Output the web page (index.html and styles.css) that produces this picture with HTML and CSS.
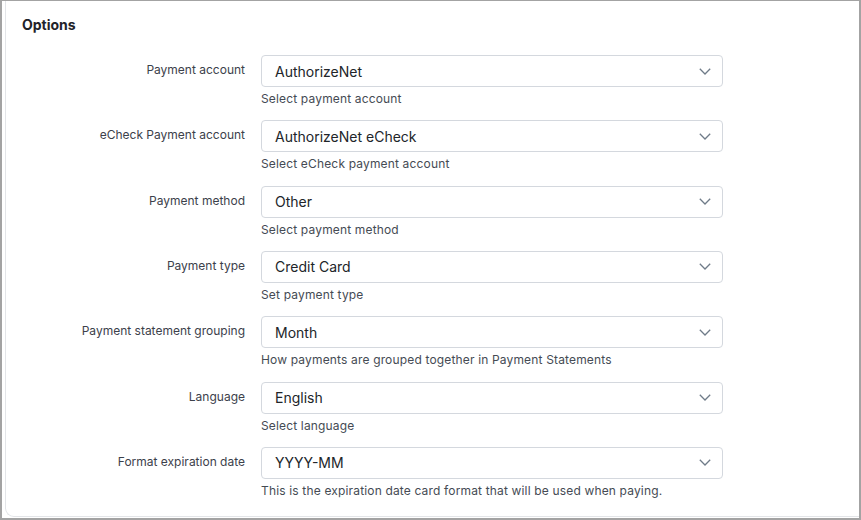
FILE: index.html
```html
<!DOCTYPE html>
<html lang="en">
<head>
<meta charset="utf-8">
<title>Options</title>
<link rel="stylesheet" href="styles.css">
</head>
<body>
<div class="frame">
  <section class="card">
    <h2 class="card-title">Options</h2>
    <div class="form">
      <div class="row">
        <label class="label">Payment account</label>
        <div class="field">
          <div class="select"><span>AuthorizeNet</span><svg class="chev" width="12" height="7" viewBox="0 0 12 7"><path d="M0.8 0.8L6 6L11.2 0.8"/></svg></div>
          <div class="help">Select payment account</div>
        </div>
      </div>
      <div class="row">
        <label class="label">eCheck Payment account</label>
        <div class="field">
          <div class="select"><span>AuthorizeNet eCheck</span><svg class="chev" width="12" height="7" viewBox="0 0 12 7"><path d="M0.8 0.8L6 6L11.2 0.8"/></svg></div>
          <div class="help">Select eCheck payment account</div>
        </div>
      </div>
      <div class="row">
        <label class="label">Payment method</label>
        <div class="field">
          <div class="select"><span>Other</span><svg class="chev" width="12" height="7" viewBox="0 0 12 7"><path d="M0.8 0.8L6 6L11.2 0.8"/></svg></div>
          <div class="help">Select payment method</div>
        </div>
      </div>
      <div class="row">
        <label class="label">Payment type</label>
        <div class="field">
          <div class="select"><span>Credit Card</span><svg class="chev" width="12" height="7" viewBox="0 0 12 7"><path d="M0.8 0.8L6 6L11.2 0.8"/></svg></div>
          <div class="help">Set payment type</div>
        </div>
      </div>
      <div class="row">
        <label class="label">Payment statement grouping</label>
        <div class="field">
          <div class="select"><span>Month</span><svg class="chev" width="12" height="7" viewBox="0 0 12 7"><path d="M0.8 0.8L6 6L11.2 0.8"/></svg></div>
          <div class="help">How payments are grouped together in Payment Statements</div>
        </div>
      </div>
      <div class="row">
        <label class="label">Language</label>
        <div class="field">
          <div class="select"><span>English</span><svg class="chev" width="12" height="7" viewBox="0 0 12 7"><path d="M0.8 0.8L6 6L11.2 0.8"/></svg></div>
          <div class="help">Select language</div>
        </div>
      </div>
      <div class="row">
        <label class="label">Format expiration date</label>
        <div class="field">
          <div class="select"><span>YYYY-MM</span><svg class="chev" width="12" height="7" viewBox="0 0 12 7"><path d="M0.8 0.8L6 6L11.2 0.8"/></svg></div>
          <div class="help">This is the expiration date card format that will be used when paying.</div>
        </div>
      </div>
    </div>
  </section>
</div>
</body>
</html>
```

FILE: styles.css
```css
* { box-sizing: border-box; }
html, body { margin: 0; padding: 0; background: #ffffff; }
body {
  width: 861px;
  height: 520px;
  font-family: Inter, "Noto Sans", "Liberation Sans", sans-serif;
  color: #212529;
  overflow: hidden;
}
.frame {
  width: 861px;
  height: 520px;
  border-style: solid;
  border-color: #a3a3a3;
  border-width: 1px 2px 2px 2px;
  padding: 0 0 1px 3px;
  overflow: hidden;
}
.card {
  height: 100%;
  border-left: 1px solid #e3e5e8;
  border-bottom: 1px solid #e3e5e8;
  border-bottom-left-radius: 9px;
  padding: 15px 16px 0 16px;
}
.card-title {
  margin: 0;
  font-size: 14px;
  font-weight: 700;
  line-height: 17px;
  color: #1f2329;
}
.form {
  margin-top: 22px;
}
.row {
  display: grid;
  grid-template-columns: 223px 462px;
  column-gap: 16px;
  margin-bottom: 12.33px;
}
.label {
  text-align: right;
  font-size: 12px;
  line-height: 16px;
  padding-top: 7px;
  color: #3c414b;
}
.select {
  height: 32px;
  border: 1px solid #d4d8de;
  border-radius: 4px;
  display: flex;
  align-items: center;
  justify-content: space-between;
  padding: 0 11px 0 13px;
  font-size: 14px;
  color: #212529;
}
.chev {
  display: block;
  fill: none;
  stroke: #6f7b88;
  stroke-width: 1.3;
}
.help {
  margin-top: 3px;
  font-size: 12px;
  line-height: 18px;
  letter-spacing: 0.16px;
  color: #454b54;
}
```
